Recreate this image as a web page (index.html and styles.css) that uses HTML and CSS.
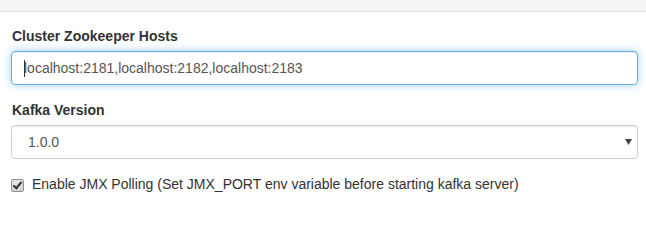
FILE: index.html
```html
<!DOCTYPE html>
<html lang="en">
<head>
<meta charset="utf-8">
<title>Cluster settings</title>
<link rel="stylesheet" href="styles.css">
</head>
<body>
<div class="topbar"></div>
<form class="panel">
  <div class="form-group">
    <label class="control-label" for="zk">Cluster Zookeeper Hosts</label>
    <div class="field">
      <input id="zk" class="form-control is-focused" type="text" value="localhost:2181,localhost:2182,localhost:2183">
      <span class="caret-mark"></span>
    </div>
  </div>
  <div class="form-group">
    <label class="control-label" for="ver">Kafka Version</label>
    <div class="field">
      <select id="ver" class="form-control select">
        <option>1.0.0</option>
      </select>
      <svg class="select-arrow" width="7" height="6" viewBox="0 0 7 6"><path d="M0 0H7L3.5 6Z" fill="#444"/></svg>
    </div>
  </div>
  <div class="checkbox">
    <label class="check-label">
      <input class="check" type="checkbox" checked>
      Enable JMX Polling (Set JMX_PORT env variable before starting kafka server)
    </label>
  </div>
</form>
</body>
</html>
```
FILE: styles.css
```css
html, body {
  margin: 0;
  padding: 0;
  background: #fff;
}
body {
  font-family: "Liberation Sans", Arial, Helvetica, sans-serif;
  font-size: 14px;
  line-height: 20px;
  color: #333;
}
.topbar {
  height: 11px;
  background: #f5f5f5;
  border-bottom: 1px solid #e3e3e3;
}
.panel {
  padding: 14px 8px 0 11px;
}
.form-group {
  margin-bottom: 15px;
}
.control-label {
  display: block;
  font-weight: 700;
  margin-bottom: 5px;
  padding-left: 1px;
}
.field {
  position: relative;
}
.form-control {
  display: block;
  box-sizing: border-box;
  width: 100%;
  height: 34px;
  padding: 6px 12px;
  font-family: inherit;
  font-size: 14px;
  line-height: 20px;
  color: #555;
  background: #fff;
  border: 1px solid #ccc;
  border-radius: 4px;
  box-shadow: inset 0 1px 1px rgba(0,0,0,.075);
  margin: 0;
  outline: none;
}
.form-control.is-focused {
  border-color: #66afe9;
  box-shadow: inset 0 1px 1px rgba(0,0,0,.075), 0 0 8px rgba(102,175,233,.6);
}
.caret-mark {
  position: absolute;
  left: 13px;
  top: 9px;
  width: 1px;
  height: 17px;
  background: #333;
}
.select {
  -webkit-appearance: none;
  appearance: none;
  padding-left: 16px;
}
.select-arrow {
  position: absolute;
  right: 6px;
  top: 14px;
}
.checkbox {
  margin-top: 0;
  margin-bottom: 10px;
}
.check-label {
  display: block;
  position: relative;
  padding-left: 21px;
  font-weight: 400;
}
.check {
  -webkit-appearance: none;
  appearance: none;
  position: absolute;
  left: 0;
  top: 5px;
  margin: 0;
  width: 13px;
  height: 13px;
  box-sizing: border-box;
  border: 1px solid #8f8f8f;
  border-radius: 2px;
  background: linear-gradient(#e4e4e4, #d4d4d4);
}
.check::after {
  content: "";
  position: absolute;
  left: 3px;
  top: 0px;
  width: 3px;
  height: 7px;
  border: solid #333;
  border-width: 0 2px 2px 0;
  transform: rotate(40deg);
}
```
